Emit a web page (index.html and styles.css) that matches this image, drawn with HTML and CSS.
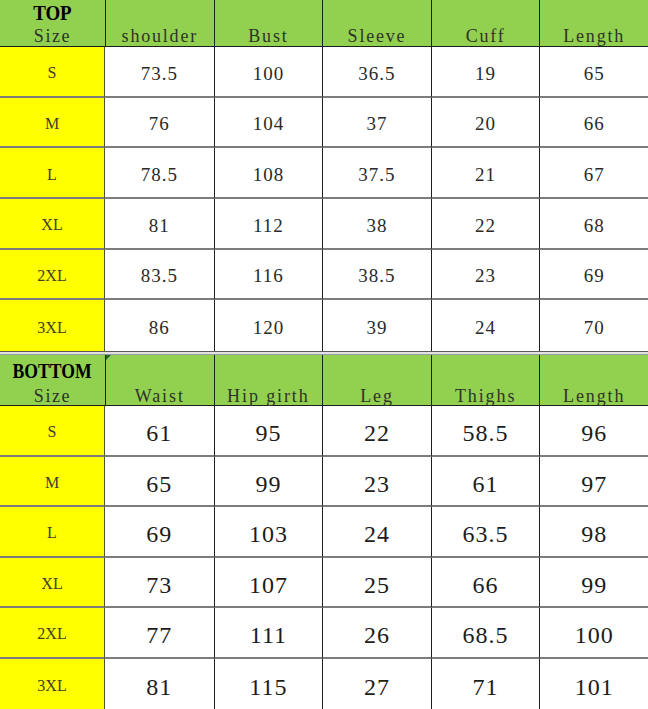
FILE: index.html
```html
<!DOCTYPE html>
<html>
<head>
<meta charset="utf-8">
<link rel="stylesheet" href="styles.css">
</head>
<body>
<div class="sheet">
  <div class="grid top">
    <div class="cell head corner"><span class="title t-top">TOP</span><span class="sub">Size</span></div>
    <div class="cell head col">shoulder</div>
    <div class="cell head col">Bust</div>
    <div class="cell head col">Sleeve</div>
    <div class="cell head col">Cuff</div>
    <div class="cell head col">Length</div>

    <div class="cell size">S</div><div class="cell num">73.5</div><div class="cell num">100</div><div class="cell num">36.5</div><div class="cell num">19</div><div class="cell num">65</div>
    <div class="cell size">M</div><div class="cell num">76</div><div class="cell num">104</div><div class="cell num">37</div><div class="cell num">20</div><div class="cell num">66</div>
    <div class="cell size">L</div><div class="cell num">78.5</div><div class="cell num">108</div><div class="cell num">37.5</div><div class="cell num">21</div><div class="cell num">67</div>
    <div class="cell size">XL</div><div class="cell num">81</div><div class="cell num">112</div><div class="cell num">38</div><div class="cell num">22</div><div class="cell num">68</div>
    <div class="cell size">2XL</div><div class="cell num">83.5</div><div class="cell num">116</div><div class="cell num">38.5</div><div class="cell num">23</div><div class="cell num">69</div>
    <div class="cell size last">3XL</div><div class="cell num last">86</div><div class="cell num last">120</div><div class="cell num last">39</div><div class="cell num last">24</div><div class="cell num last">70</div>
  </div>
  <div class="separator"></div>
  <div class="grid bottom">
    <div class="cell head corner"><span class="title t-bottom">BOTTOM</span><span class="sub">Size</span></div>
    <div class="cell head col marked">Waist</div>
    <div class="cell head col">Hip girth</div>
    <div class="cell head col">Leg</div>
    <div class="cell head col">Thighs</div>
    <div class="cell head col">Length</div>

    <div class="cell size">S</div><div class="cell big">61</div><div class="cell big">95</div><div class="cell big">22</div><div class="cell big">58.5</div><div class="cell big">96</div>
    <div class="cell size">M</div><div class="cell big">65</div><div class="cell big">99</div><div class="cell big">23</div><div class="cell big">61</div><div class="cell big">97</div>
    <div class="cell size">L</div><div class="cell big">69</div><div class="cell big">103</div><div class="cell big">24</div><div class="cell big">63.5</div><div class="cell big">98</div>
    <div class="cell size">XL</div><div class="cell big">73</div><div class="cell big">107</div><div class="cell big">25</div><div class="cell big">66</div><div class="cell big">99</div>
    <div class="cell size">2XL</div><div class="cell big">77</div><div class="cell big">111</div><div class="cell big">26</div><div class="cell big">68.5</div><div class="cell big">100</div>
    <div class="cell size last">3XL</div><div class="cell big last">81</div><div class="cell big last">115</div><div class="cell big last">27</div><div class="cell big last">71</div><div class="cell big last">101</div>
  </div>
</div>
</body>
</html>
```

FILE: styles.css
```css
html, body {
  margin: 0;
  padding: 0;
  background: #ffffff;
}

.sheet {
  width: 648px;
  height: 709px;
  overflow: hidden;
}

.grid {
  display: grid;
  grid-template-columns: 105px repeat(5, 1fr);
}

.top {
  height: 351px;
  grid-template-rows: 47px repeat(6, 1fr);
}

.bottom {
  height: 354px;
  grid-template-rows: 51px repeat(6, 1fr);
}

.separator {
  height: 4px;
  box-sizing: border-box;
  border-top: 1px solid #5a5a5a;
  border-bottom: 1px solid #9a9a9a;
  background: #e2e2e2;
}

.cell {
  box-sizing: border-box;
  display: flex;
  align-items: center;
  justify-content: center;
  border-bottom: 2px solid #7c7c7c;
  border-left: 1px solid #1e1e1e;
  background: #ffffff;
  position: relative;
}

.cell.last {
  border-bottom: none;
}

.head {
  background: #92d050;
  border-bottom: 1px solid #1e1e1e;
}

.corner {
  border-left: none;
  flex-direction: column;
  justify-content: space-between;
  padding: 3px 0 1px;
}

.col {
  align-items: flex-end;
  padding-bottom: 1px;
  font-family: "Liberation Serif", serif;
  font-size: 18px;
  line-height: 1;
  letter-spacing: 1.8px;
  color: #2e3328;
}

.bottom .col {
  letter-spacing: 1.9px;
  padding-bottom: 0;
}

.title {
  font-family: "Liberation Serif", serif;
  font-weight: bold;
  color: #000000;
  line-height: 1;
  display: inline-block;
}

.t-top {
  font-size: 21px;
  transform: scaleX(0.9);
}

.t-bottom {
  font-size: 21px;
  transform: scaleX(0.84);
}

.bottom .corner {
  padding-top: 6px;
  padding-bottom: 0;
}

.sub {
  font-family: "Liberation Serif", serif;
  font-size: 18px;
  line-height: 1;
  letter-spacing: 1.6px;
  color: #2e3328;
}

.size {
  background: #ffff00;
  border-left: none;
  border-right: 1px solid #55552a;
  font-family: "Liberation Serif", serif;
  font-size: 16px;
  color: #40402a;
  padding-top: 4px;
}

.size + .cell {
  border-left: none;
}

.num {
  font-family: "Liberation Serif", serif;
  font-size: 19px;
  color: #2a2a2a;
  letter-spacing: 1px;
  padding-top: 5px;
}

.big {
  font-family: "Liberation Serif", serif;
  font-size: 24px;
  color: #1c1c1c;
  letter-spacing: 1px;
  padding-top: 7px;
}

.marked::before {
  content: "";
  position: absolute;
  top: 0;
  left: 0;
  width: 0;
  height: 0;
  border-top: 5px solid #1f6b1f;
  border-right: 5px solid transparent;
}
```
